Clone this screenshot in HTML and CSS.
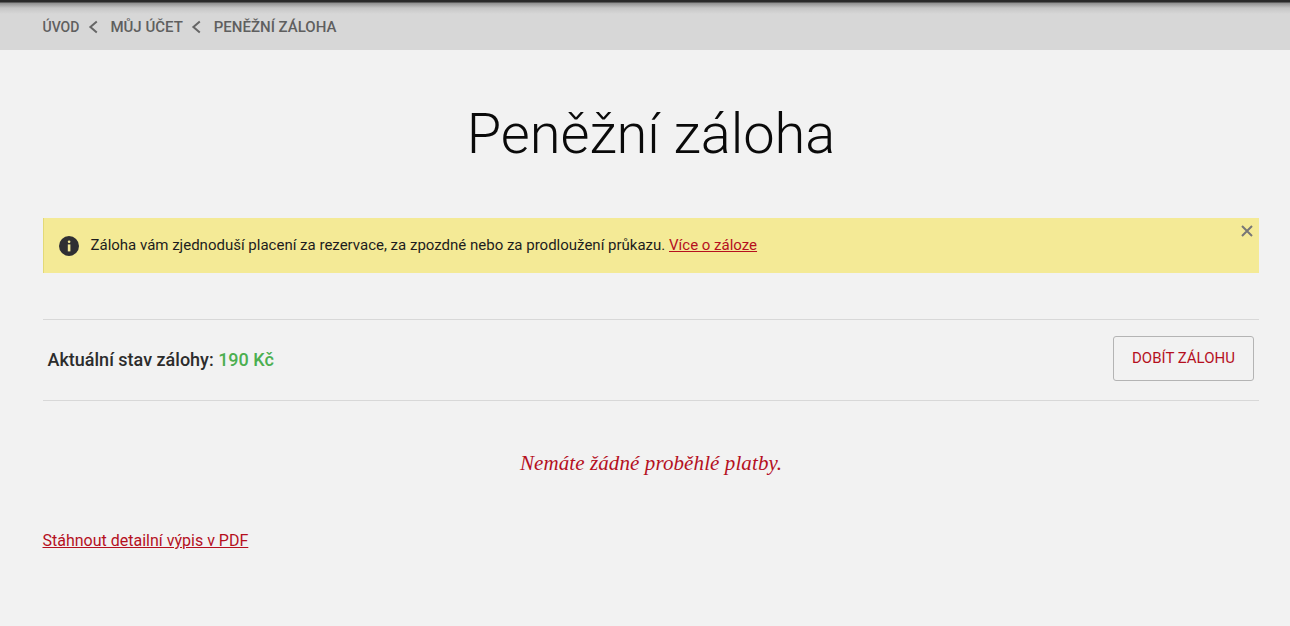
FILE: index.html
```html
<!DOCTYPE html>
<html lang="cs">
<head>
<meta charset="utf-8">
<title>Peněžní záloha</title>
<link rel="stylesheet" href="styles.css">
</head>
<body>
<nav class="crumbs">
  <a class="crumb crumb-first" href="#">ÚVOD</a>
  <svg class="chev" width="10" height="14" viewBox="0 0 10 14"><path d="M8.8 1.6 2.4 7 8.8 12.4" fill="none" stroke="#666" stroke-width="2"/></svg>
  <a class="crumb" href="#">MŮJ ÚČET</a>
  <svg class="chev" width="10" height="14" viewBox="0 0 10 14"><path d="M8.8 1.6 2.4 7 8.8 12.4" fill="none" stroke="#666" stroke-width="2"/></svg>
  <span class="crumb">PENĚŽNÍ ZÁLOHA</span>
</nav>
<main class="content">
  <h1 class="title">Peněžní záloha</h1>
  <div class="notice">
    <svg class="notice-icon" width="20" height="20" viewBox="0 0 20 20"><circle cx="10" cy="10" r="10" fill="#2f2f33"/><rect x="8.8" y="4.4" width="2.6" height="2.6" rx="1.2" fill="#f4ea96"/><rect x="8.8" y="8.4" width="2.6" height="7" fill="#f4ea96"/></svg>
    <p class="notice-text">Záloha vám zjednoduší placení za rezervace, za zpozdné nebo za prodloužení průkazu. <a href="#">Více o záloze</a></p>
    <svg class="notice-close" width="12" height="12" viewBox="0 0 12 12"><path d="M1 1 11 11M11 1 1 11" stroke="#777" stroke-width="2"/></svg>
  </div>
  <div class="balance">
    <div class="balance-label">Aktuální stav zálohy: <span class="amount">190 Kč</span></div>
    <a class="btn" href="#">DOBÍT ZÁLOHU</a>
  </div>
  <p class="empty">Nemáte žádné proběhlé platby.</p>
  <a class="pdf" href="#">Stáhnout detailní výpis v PDF</a>
</main>
</body>
</html>
```
FILE: styles.css
```css
html, body { margin: 0; padding: 0; }
body { background: #f2f2f2; font-family: Roboto, sans-serif; color: #222; height: 626px; overflow: hidden; }
a { color: #b5101e; }
.crumbs { height: 50px; box-sizing: border-box; padding: 4px 0 0 43px; display: flex; align-items: center; background: linear-gradient(#2a2a2a 0, #2a2a2a 2px, #8f8f8f 3px, #c6c6c6 8px, #d7d7d7 14px); }
.crumb { font-size: 15px; font-weight: 500; color: #5f5f5f; text-decoration: none; }
.crumb-first { font-size: 14px; margin-left: -.5px; margin-top: -1px; }
.chev { margin: 0 12.5px 0 8.5px; }
.content { padding: 0 31px 0 43px; display: flex; flex-direction: column; }
.title { margin: 49px 0 0; text-align: center; font-size: 56px; line-height: 70px; font-weight: 300; color: #0a0a0a; letter-spacing: -.03px; }
.notice { margin-top: 49px; height: 55px; box-sizing: border-box; background: #f4ea96; border-left: 1px solid #e3d978; display: flex; align-items: center; padding-left: 15px; position: relative; }
.notice-text { margin: -2px 0 0 11.5px; font-size: 15px; color: #1d1d1d; }
.notice-close { position: absolute; top: 7px; right: 6px; }
.balance { margin-top: 46px; height: 82px; box-sizing: border-box; border-top: 1px solid #d8d8d8; border-bottom: 1px solid #d8d8d8; display: flex; align-items: center; justify-content: space-between; padding: 0 5px 2px; }
.balance-label { font-size: 18px; font-weight: 500; color: #2c2c2c; margin-left: -.5px; }
.amount { color: #4caf50; }
.btn { width: 141px; height: 45px; box-sizing: border-box; border: 1px solid #b4b4b4; border-radius: 3px; display: flex; align-items: center; justify-content: center; font-size: 15px; text-decoration: none; margin-top: -2px; }
.empty { margin: 47px 0 0; text-align: center; font-family: "Liberation Serif", serif; font-style: italic; font-size: 21px; line-height: 30px; color: #b5101e; letter-spacing: .1px; }
.pdf { margin: 53px 0 0 -.5px; font-size: 16px; line-height: 20px; align-self: flex-start; }
```
